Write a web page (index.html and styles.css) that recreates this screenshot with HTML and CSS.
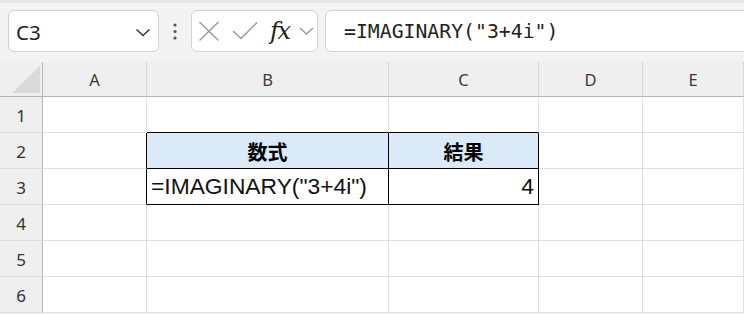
FILE: index.html
```html
<!DOCTYPE html>
<html lang="ja">
<head>
<meta charset="utf-8">
<link rel="stylesheet" href="styles.css">
</head>
<body>
<div class="topband"></div>
<div class="toolbar">
  <div class="namebox">
    <span class="ref">C3</span>
    <svg class="chev" width="18" height="40" viewBox="0 0 18 40"><polyline points="1.5,18.5 8,24.5 14.5,18.5" fill="none" stroke="#3a3a3a" stroke-width="1.6"/></svg>
  </div>
  <div class="dots">
    <svg width="6" height="40" viewBox="0 0 6 40"><circle cx="3" cy="14" r="1.6" fill="#555"/><circle cx="3" cy="20.5" r="1.6" fill="#555"/><circle cx="3" cy="27" r="1.6" fill="#555"/></svg>
  </div>
  <div class="fxbox">
    <svg class="icon-x" width="22" height="40" viewBox="0 0 22 40"><line x1="1.5" y1="11" x2="20.5" y2="29.5" stroke="#9a9a9a" stroke-width="1.4"/><line x1="20.5" y1="11" x2="1.5" y2="29.5" stroke="#9a9a9a" stroke-width="1.4"/></svg>
    <svg class="icon-check" width="40" height="40" viewBox="0 0 40 40"><polyline points="13,20 21,27.5 37,11.5" fill="none" stroke="#9a9a9a" stroke-width="1.4"/></svg>
    <span class="fx">fx</span>
    <svg class="icon-chev" width="19" height="40" viewBox="0 0 19 40"><polyline points="2,17 8.5,23 15,17" fill="none" stroke="#9a9a9a" stroke-width="1.4"/></svg>
  </div>
  <div class="formula">=IMAGINARY("3+4i")</div>
</div>
<div class="sheet">
  <div class="corner"><svg width="43" height="35" viewBox="0 0 43 35"><polygon points="40,4 40,31 12,31" fill="#dadada"/></svg></div>
  <div class="colhead">A</div>
  <div class="colhead">B</div>
  <div class="colhead">C</div>
  <div class="colhead">D</div>
  <div class="colhead">E</div>

  <div class="rowhead">1</div>
  <div class="cell"></div>
  <div class="cell bb"></div>
  <div class="cell bb"></div>
  <div class="cell"></div>
  <div class="cell"></div>

  <div class="rowhead">2</div>
  <div class="cell br"></div>
  <div class="cell tb hdr">数式</div>
  <div class="cell tb hdr">結果</div>
  <div class="cell"></div>
  <div class="cell"></div>

  <div class="rowhead">3</div>
  <div class="cell br"></div>
  <div class="cell tb val">=IMAGINARY("3+4i")</div>
  <div class="cell tb val num">4</div>
  <div class="cell"></div>
  <div class="cell"></div>

  <div class="rowhead">4</div>
  <div class="cell"></div>
  <div class="cell"></div>
  <div class="cell"></div>
  <div class="cell"></div>
  <div class="cell"></div>

  <div class="rowhead">5</div>
  <div class="cell"></div>
  <div class="cell"></div>
  <div class="cell"></div>
  <div class="cell"></div>
  <div class="cell"></div>

  <div class="rowhead">6</div>
  <div class="cell"></div>
  <div class="cell"></div>
  <div class="cell"></div>
  <div class="cell"></div>
  <div class="cell"></div>
</div>
</body>
</html>
```

FILE: styles.css
```css
* { box-sizing: border-box; }
html, body {
  margin: 0;
  padding: 0;
  background: #f3f3f3;
  overflow: hidden;
}
body {
  width: 744px;
  height: 314px;
  font-family: "Noto Sans", "Liberation Sans", sans-serif;
}
.topband {
  height: 3px;
  background: #e6e6e6;
}
.toolbar {
  display: flex;
  align-items: flex-start;
  height: 59px;
  padding-top: 7px;
  padding-left: 8px;
}
.namebox {
  width: 151px;
  height: 42px;
  background: #fff;
  border: 1px solid #d2d2d2;
  border-radius: 6px;
  display: flex;
  align-items: center;
  justify-content: space-between;
  padding-left: 7px;
  padding-right: 5px;
}
.ref {
  font-family: "Noto Sans", sans-serif;
  font-size: 20.5px;
  color: #222;
  line-height: 1;
  margin-top: 2px;
}
.dots {
  width: 32px;
  height: 42px;
  display: flex;
  align-items: center;
  justify-content: center;
}
.fxbox {
  width: 127px;
  height: 42px;
  background: #fff;
  border: 1px solid #d2d2d2;
  border-radius: 6px;
  display: flex;
  align-items: center;
  padding-left: 6px;
}
.fx {
  width: 38px;
  padding-left: 10px;
  font-family: "DejaVu Serif", "Liberation Serif", serif;
  font-style: italic;
  font-size: 24px;
  color: #222;
  line-height: 1;
  letter-spacing: -1.5px;
}
.formula {
  flex: 1;
  height: 42px;
  margin-left: 7px;
  margin-right: -10px;
  background: #fff;
  border: 1px solid #d2d2d2;
  border-radius: 6px 0 0 6px;
  display: flex;
  align-items: center;
  padding-left: 18px;
  font-family: "DejaVu Sans Mono", "Liberation Mono", monospace;
  font-size: 19.8px;
  color: #222;
}
.sheet {
  display: grid;
  grid-template-columns: 43px 104px 242px 150px 104px 101px;
  grid-template-rows: 35px repeat(6, 36px);
  background: #fff;
}
.corner {
  background: #efefef;
  border-right: 1px solid #b4b4b4;
  border-bottom: 1px solid #b4b4b4;
}
.corner svg { display: block; }
.colhead {
  background: #efefef;
  border-right: 1px solid #d6d6d6;
  border-bottom: 1px solid #b4b4b4;
  display: flex;
  align-items: center;
  justify-content: center;
  font-size: 16.5px;
  color: #3a3a3a;
  padding-top: 1px;
}
.rowhead {
  background: #efefef;
  border-right: 1px solid #b4b4b4;
  border-bottom: 1px solid #dadada;
  display: flex;
  align-items: center;
  justify-content: center;
  font-size: 17px;
  color: #333;
  padding-top: 2px;
}
.cell {
  background: #fff;
  border-right: 1px solid #e0e0e0;
  border-bottom: 1px solid #e0e0e0;
  display: flex;
  align-items: center;
}
.cell.bb { border-bottom-color: #000; }
.cell.br { border-right-color: #000; }
.cell.tb {
  border-right-color: #000;
  border-bottom-color: #000;
}
.hdr {
  background: #daeaf8;
  justify-content: center;
  font-family: "Noto Sans CJK JP", sans-serif;
  font-weight: bold;
  font-size: 20px;
  color: #000;
  padding-top: 1px;
}
.val {
  font-family: "Liberation Sans", Arial, sans-serif;
  font-size: 22.8px;
  color: #111;
  padding-left: 4px;
  padding-bottom: 1px;
}
.num {
  justify-content: flex-end;
  padding-right: 4px;
}
```
